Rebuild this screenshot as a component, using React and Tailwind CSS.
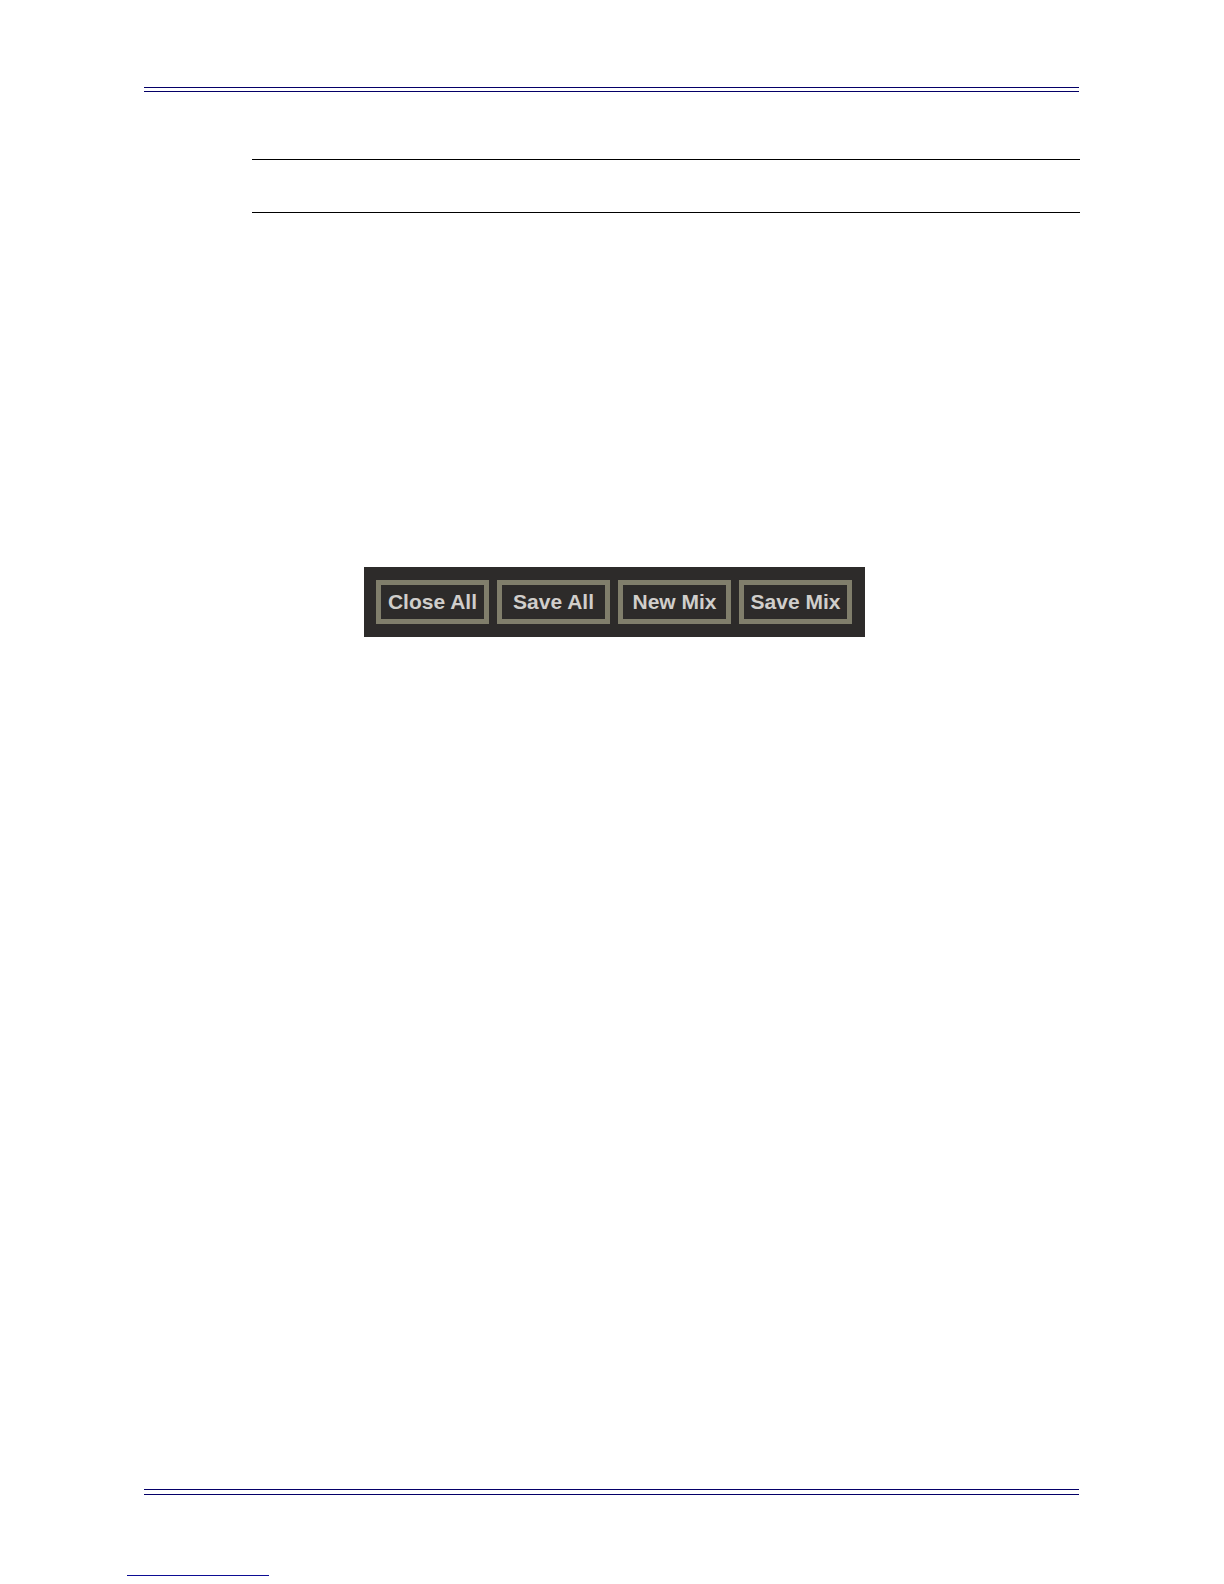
const actions = ['Close All', 'Save All', 'New Mix', 'Save Mix'];

function Toolbar() {
  return (
    <div className="flex w-fit gap-2 bg-[#2d2b2a] py-[13px] pl-3 pr-[13px]">
      {actions.map((label) => (
        <button
          key={label}
          type="button"
          className="w-[113px] h-11 border-[5px] border-[#807e6b] text-[21px] leading-6 font-bold text-[#d0cecb] whitespace-nowrap flex items-center justify-center"
        >
          {label}
        </button>
      ))}
    </div>
  );
}

export default function App() {
  return (
    <div className="min-h-screen flex flex-col bg-white font-['Liberation_Sans',Arial,sans-serif]">
      <header className="mt-[87px] ml-36 mr-[145px] h-[5px] border-y border-[#040068]" />

      <main className="grow mt-[67px] ml-[252px] mr-36">
        <div className="h-[54px] border-y border-black" />
        <div className="mt-[354px] ml-28">
          <Toolbar />
        </div>
      </main>

      <footer className="mb-2">
        <div className="ml-36 mr-[145px] h-1.5 border-y border-[#040068]" />
        <div className="mt-20 ml-[127px] w-[142px] border-t border-[#0c0c94]" />
      </footer>
    </div>
  );
}
